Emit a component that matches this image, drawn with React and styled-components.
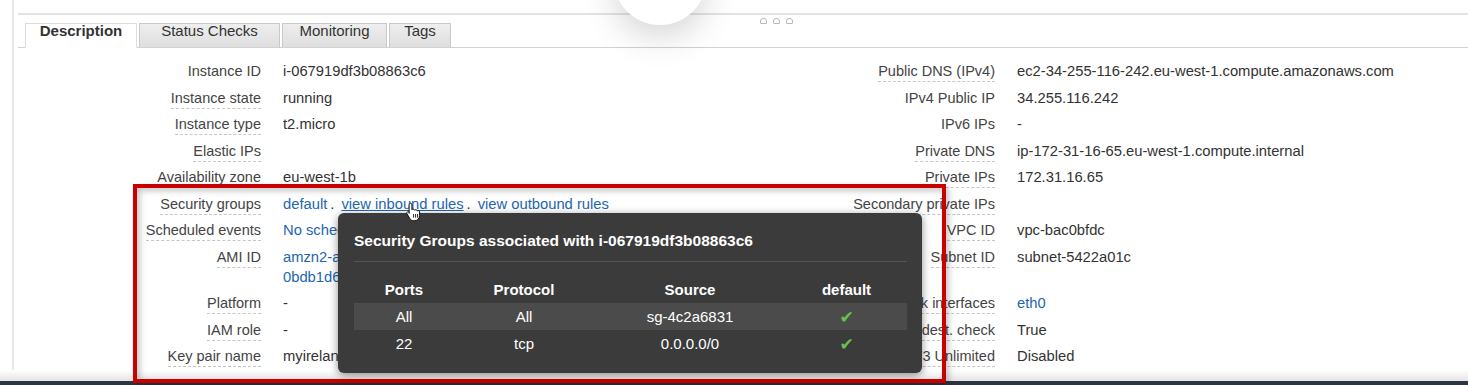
import React from 'react'
import styled, { createGlobalStyle } from 'styled-components'

const GlobalStyle = createGlobalStyle`
  html, body {
    margin: 0;
    padding: 0;
    background: #fff;
  }

  body {
    font-family: 'Liberation Sans', Arial, Helvetica, sans-serif;
    font-size: 14px;
    color: #333;
  }
`

const Screen = styled.div`
  position: relative;
  display: flex;
  flex-direction: column;
  width: 1468px;
  height: 385px;
  overflow: hidden;
  background: #fff;
`

const Panel = styled.div`
  flex: 1;
  display: flex;
  flex-direction: column;
  margin-left: 12px;
  padding-top: 13px;
  border-left: 2px solid #e7e7e7;
`

const TopRule = styled.div`
  height: 2px;
  margin-left: 4px;
  background: #e3e3e3;
`

const TabBar = styled.div`
  position: relative;
  display: flex;
  align-items: flex-end;
  gap: 2px;
  height: 32px;
  margin-left: 4px;
  padding-left: 7px;
  border-bottom: 1px solid #d2d2d2;
`

const Tab = styled.div`
  box-sizing: border-box;
  width: ${(p) => p.$w}px;
  height: 25px;
  margin-bottom: -1px;
  border: 1px solid ${(p) => (p.$active ? '#dcdcdc' : '#c9c9c9')};
  border-bottom: 1px solid ${(p) => (p.$active ? '#fff' : '#d2d2d2')};
  background: ${(p) => (p.$active ? '#fff' : 'linear-gradient(#eeeeee, #dedede)')};
  font-size: 15px;
  font-weight: ${(p) => (p.$active ? 700 : 400)};
  line-height: 14px;
  text-align: center;
  color: #333;
`

const Grip = styled.div`
  position: absolute;
  left: 742px;
  top: 3px;
  display: flex;
  gap: 6px;

  > span {
    width: 5px;
    height: 4px;
    border: 1px solid #b8b8b8;
    border-radius: 3px 3px 1px 1px;
  }
`

const Details = styled.div`
  display: grid;
  grid-template-columns: 247px 430px 260px 1fr;
  grid-auto-rows: minmax(20px, auto);
  align-items: start;
  column-gap: 22px;
  row-gap: 6.5px;
  padding-top: 13px;
  line-height: 20px;
`

const Label = styled.div`
  height: 20px;
  font-size: 14.5px;
  text-align: right;
  color: #444;

  > span {
    display: inline-block;
    vertical-align: top;
    line-height: 20px;
    border-bottom: 1px dashed ${(p) => (p.$tip ? '#c6c6c6' : 'transparent')};
  }
`

const Value = styled.div`
  font-size: 14.75px;
  color: #333;
  white-space: nowrap;
`

const Link = styled.span`
  color: #1e66b0;
  text-decoration: ${(p) => (p.$hover ? 'underline' : 'none')};
`

const Dot = styled.span`
  margin: 0 7px 0 3px;
  color: #333;
`

const BottomFade = styled.div`
  height: 11px;
  background: linear-gradient(#ffffff, #e4e4e6);
`

const Taskbar = styled.div`
  height: 4px;
  background: #2c3440;
`

const Bubble = styled.div`
  position: absolute;
  left: 613px;
  top: -69px;
  width: 94px;
  height: 94px;
  border-radius: 50%;
  background: #fff;
  box-shadow: 0 12px 34px rgba(0, 0, 0, 0.16);
`

const Highlight = styled.div`
  position: absolute;
  left: 133px;
  top: 184px;
  box-sizing: border-box;
  width: 813px;
  height: 199px;
  border: 4px solid #c70000;
  box-shadow: 3px 3px 6px rgba(0, 0, 0, 0.22), inset 3px 3px 6px rgba(0, 0, 0, 0.22);
  pointer-events: none;
`

const Popover = styled.div`
  position: absolute;
  left: 338px;
  top: 213px;
  box-sizing: border-box;
  width: 584px;
  height: 160px;
  padding: 18px 15px 0 16px;
  border-radius: 6px;
  background: #3b3b3b;
  box-shadow: 0 2px 8px rgba(0, 0, 0, 0.45);
  color: #fff;
`

const PopTitle = styled.div`
  padding-bottom: 10px;
  border-bottom: 1px solid #555;
  font-size: 15.5px;
  font-weight: 700;
  line-height: 20px;
`

const RulesTable = styled.table`
  width: 553px;
  margin-top: 14px;
  border-collapse: collapse;
  table-layout: fixed;
  font-size: 15px;

  th, td {
    height: 27px;
    padding: 0;
    text-align: center;
    color: #fff;
  }

  th {
    font-weight: 700;
  }
`

const RuleRow = styled.tr`
  background: ${(p) => (p.$shade ? '#4b4b4b' : 'transparent')};
`

const Check = styled.span`
  font-family: 'DejaVu Sans', sans-serif;
  font-size: 17px;
  color: #6cc04f;
`

const Cursor = styled.svg`
  position: absolute;
  left: 405px;
  top: 202px;
`

const rows = [
  ['Instance ID', 'i-067919df3b08863c6', false, 'Public DNS (IPv4)', 'ec2-34-255-116-242.eu-west-1.compute.amazonaws.com', true],
  ['Instance state', 'running', true, 'IPv4 Public IP', '34.255.116.242', false],
  ['Instance type', 't2.micro', true, 'IPv6 IPs', '-', false],
  ['Elastic IPs', '', true, 'Private DNS', 'ip-172-31-16-65.eu-west-1.compute.internal', true],
  ['Availability zone', 'eu-west-1b', true, 'Private IPs', '172.31.16.65', true],
  ['Security groups', 'sg', true, 'Secondary private IPs', '', true],
  ['Scheduled events', 'events', true, 'VPC ID', 'vpc-bac0bfdc', true],
  ['AMI ID', 'ami', true, 'Subnet ID', 'subnet-5422a01c', true],
  ['Platform', '-', true, 'Network interfaces', 'eth0', true],
  ['IAM role', '-', true, 'Source/dest. check', 'True', true],
  ['Key pair name', 'myirelandkp', true, 'T2/T3 Unlimited', 'Disabled', true],
]

const rules = [
  ['All', 'All', 'sg-4c2a6831'],
  ['22', 'tcp', '0.0.0.0/0'],
]

function renderValue(v) {
  if (v === 'sg') {
    return (
      <>
        <Link>default</Link>
        <Dot>.</Dot>
        <Link $hover>view inbound rules</Link>
        <Dot>.</Dot>
        <Link>view outbound rules</Link>
      </>
    )
  }
  if (v === 'events') return <Link>No scheduled events</Link>
  if (v === 'ami') {
    return (
      <Link>
        amzn2-ami-hvm-2.0.20180622.1-x86_64-gp2 (ami-
        <br />
        0bdb1d6c15a40392c)
      </Link>
    )
  }
  if (v === 'eth0') return <Link>eth0</Link>
  return v
}

function HandCursor() {
  return (
    <Cursor width="16" height="20" viewBox="0 0 16 20">
      <path
        d="M5.5 1.2C6.3 1.2 6.9 1.8 6.9 2.6V7.8C7.2 7.4 7.7 7.2 8.2 7.2C8.9 7.2 9.4 7.6 9.6 8.2C9.9 7.9 10.3 7.7 10.8 7.7C11.5 7.7 12.1 8.2 12.2 8.8C12.5 8.6 12.8 8.5 13.2 8.5C14 8.5 14.6 9.1 14.6 9.9V13.5C14.6 16.3 12.7 18.7 9.9 18.7H8.3C6.8 18.7 5.7 17.9 4.9 16.7L2 11.8C1.6 11.1 1.8 10.3 2.4 9.9C3 9.5 3.8 9.6 4.2 10.2L4.1 11.4V2.6C4.1 1.8 4.7 1.2 5.5 1.2Z"
        fill="#fff"
        stroke="#111"
        strokeWidth="1"
        strokeLinejoin="round"
      />
      <path d="M8.6 12v3.6M10.6 12v3.6M12.6 12v3.6" stroke="#111" strokeWidth="0.9" />
    </Cursor>
  )
}

export default function App() {
  return (
    <>
      <GlobalStyle />
      <Screen>
        <Panel>
          <TopRule />
          <TabBar>
            <Tab $w={112} $active>Description</Tab>
            <Tab $w={141}>Status Checks</Tab>
            <Tab $w={105}>Monitoring</Tab>
            <Tab $w={62}>Tags</Tab>
            <Grip>
              <span />
              <span />
              <span />
            </Grip>
          </TabBar>
          <Details>
            {rows.map(([l1, v1, t1, l2, v2, t2]) => (
              <React.Fragment key={l1}>
                <Label $tip={t1}>
                  <span>{l1}</span>
                </Label>
                <Value>{renderValue(v1)}</Value>
                <Label $tip={t2}>
                  <span>{l2}</span>
                </Label>
                <Value>{renderValue(v2)}</Value>
              </React.Fragment>
            ))}
          </Details>
        </Panel>
        <BottomFade />
        <Taskbar />

        <Bubble />
        <Highlight />
        <Popover>
          <PopTitle>Security Groups associated with i-067919df3b08863c6</PopTitle>
          <RulesTable>
            <colgroup>
              <col style={{ width: 100 }} />
              <col style={{ width: 140 }} />
              <col style={{ width: 192 }} />
              <col style={{ width: 121 }} />
            </colgroup>
            <thead>
              <tr>
                <th>Ports</th>
                <th>Protocol</th>
                <th>Source</th>
                <th>default</th>
              </tr>
            </thead>
            <tbody>
              {rules.map(([port, proto, src], i) => (
                <RuleRow key={port} $shade={i === 0}>
                  <td>{port}</td>
                  <td>{proto}</td>
                  <td>{src}</td>
                  <td>
                    <Check>✔</Check>
                  </td>
                </RuleRow>
              ))}
            </tbody>
          </RulesTable>
        </Popover>
        <HandCursor />
      </Screen>
    </>
  )
}
